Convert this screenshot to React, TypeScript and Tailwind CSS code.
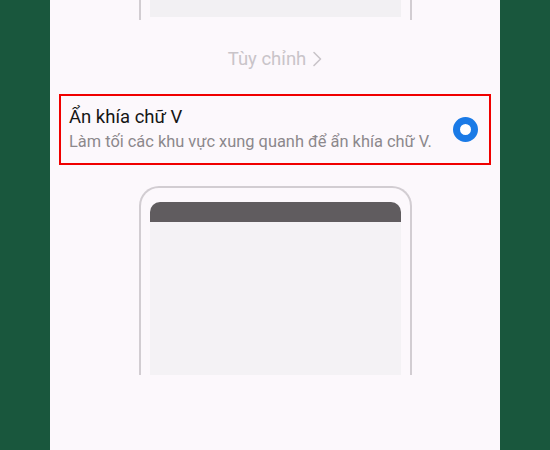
export default function App() {
  return (
    <div className="w-[550px] h-[450px] bg-[#19573d] flex justify-center overflow-hidden font-['Roboto','Noto_Sans',sans-serif]">
      <div className="w-[450px] h-full bg-[#fcf8fc] flex flex-col">
        {/* top preview, cut off */}
        <div className="ml-[89px] w-[273px] h-[20px] border-x-2 border-[#d2cdd2] px-[9px]">
          <div className="h-[17px] bg-[#f2f0f3]" />
        </div>

        <div className="mt-[27px] h-[24px] flex items-center justify-center gap-[6px] text-[18.5px] leading-[24px] text-[#c9c4c9]">
          <span>Tùy chỉnh</span>
          <svg width="10" height="16" viewBox="0 0 10 16" fill="none">
            <path d="M2 1.5 L8.5 8 L2 14.5" stroke="#c9c4c9" strokeWidth="1.6" strokeLinecap="round" strokeLinejoin="round" />
          </svg>
        </div>

        <div className="mt-[23px] mx-[9px] h-[71px] border-2 border-[#f00000] flex items-center justify-between pl-[8px] pr-[11px]">
          <div className="flex flex-col gap-[2px] -mt-[1px]">
            <span className="text-[18.5px] leading-[24px] text-[#161616]">Ẩn khía chữ V</span>
            <span className="text-[16.4px] leading-[22px] text-[#8c888c]">Làm tối các khu vực xung quanh để ẩn khía chữ V.</span>
          </div>
          <div className="w-[25px] h-[25px] rounded-full border-[7px] border-[#1a7ae6] bg-white" />
        </div>

        {/* bottom preview */}
        <div className="mt-[21px] ml-[89px] w-[273px] h-[189px] border-2 border-b-0 border-[#d2cdd2] rounded-t-[20px] px-[9px] pt-[14px]">
          <div className="h-[20px] bg-[#605c5f] rounded-t-[10px]" />
          <div className="h-[153px] bg-[#f4f2f5]" />
        </div>
      </div>
    </div>
  )
}
